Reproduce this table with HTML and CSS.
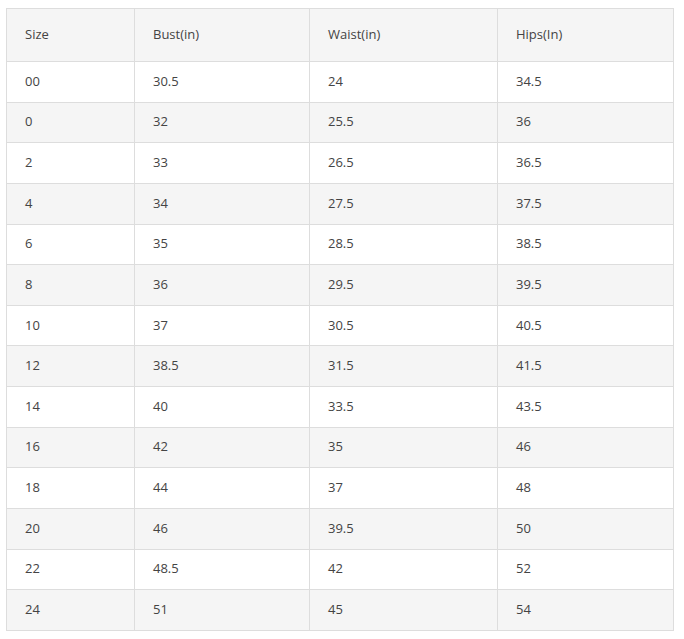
FILE: index.html
```html
<!DOCTYPE html>
<html>
<head>
<meta charset="utf-8">
<link rel="stylesheet" href="styles.css">
</head>
<body>
<table class="size-table">
  <colgroup>
    <col class="c1"><col class="c2"><col class="c3"><col class="c4">
  </colgroup>
  <thead>
    <tr><th>Size</th><th>Bust(in)</th><th>Waist(in)</th><th>Hips(In)</th></tr>
  </thead>
  <tbody>
    <tr><td>00</td><td>30.5</td><td>24</td><td>34.5</td></tr>
    <tr><td>0</td><td>32</td><td>25.5</td><td>36</td></tr>
    <tr><td>2</td><td>33</td><td>26.5</td><td>36.5</td></tr>
    <tr><td>4</td><td>34</td><td>27.5</td><td>37.5</td></tr>
    <tr><td>6</td><td>35</td><td>28.5</td><td>38.5</td></tr>
    <tr><td>8</td><td>36</td><td>29.5</td><td>39.5</td></tr>
    <tr><td>10</td><td>37</td><td>30.5</td><td>40.5</td></tr>
    <tr><td>12</td><td>38.5</td><td>31.5</td><td>41.5</td></tr>
    <tr><td>14</td><td>40</td><td>33.5</td><td>43.5</td></tr>
    <tr><td>16</td><td>42</td><td>35</td><td>46</td></tr>
    <tr><td>18</td><td>44</td><td>37</td><td>48</td></tr>
    <tr><td>20</td><td>46</td><td>39.5</td><td>50</td></tr>
    <tr><td>22</td><td>48.5</td><td>42</td><td>52</td></tr>
    <tr><td>24</td><td>51</td><td>45</td><td>54</td></tr>
  </tbody>
</table>
</body>
</html>
```
FILE: styles.css
```css
html, body {
  margin: 0;
  background: #ffffff;
}
body {
  padding: 8px 0 0 6px;
  font-family: "Open Sans", "Liberation Sans", sans-serif;
  font-size: 13px;
  color: #444444;
}
.size-table {
  border-collapse: collapse;
  table-layout: fixed;
  width: 667px;
}
.c1 { width: 128px; }
.c2 { width: 175px; }
.c3 { width: 188px; }
.c4 { width: 176px; }
.size-table th,
.size-table td {
  border: 1px solid #dddddd;
  text-align: left;
  font-weight: normal;
  padding: 0 18px 2px;
  line-height: 18px;
}
.size-table th {
  height: 50px;
  background: #f5f5f5;
}
.size-table td {
  height: 37.64px;
}
.size-table tbody tr:nth-child(even) td {
  background: #f5f5f5;
}
.size-table tbody tr:nth-child(odd) td {
  background: #ffffff;
}
```
